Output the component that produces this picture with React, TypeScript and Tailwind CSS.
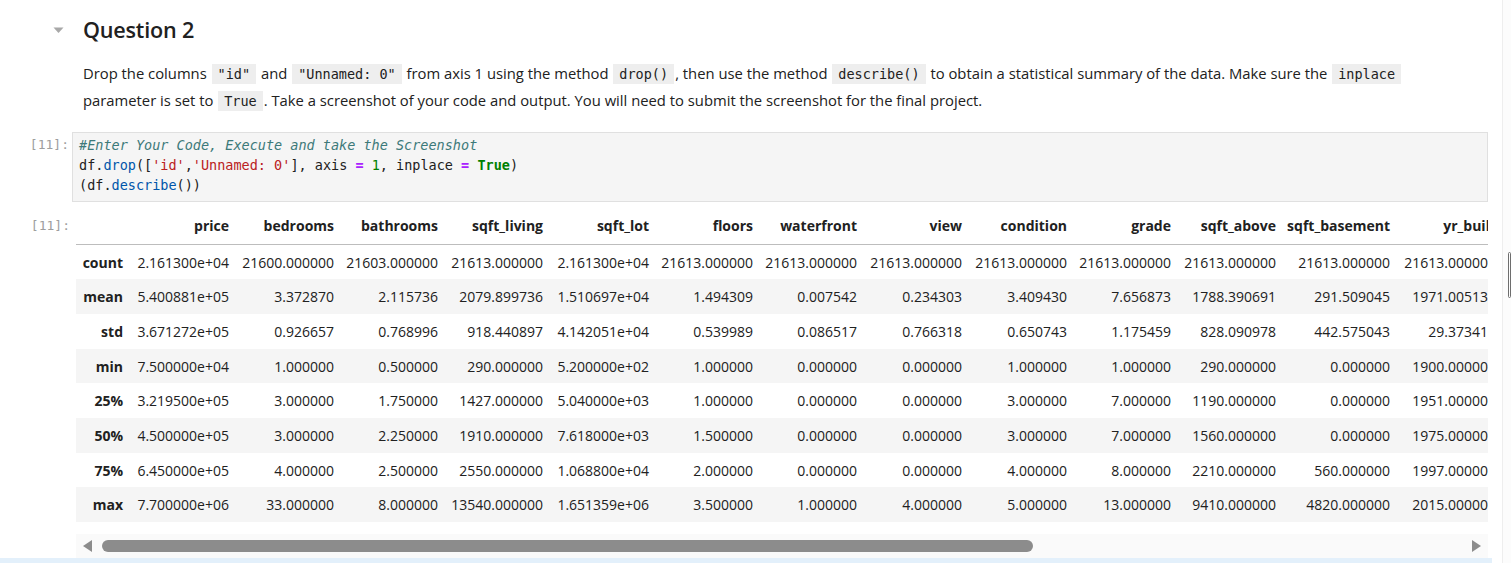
const ROWS: [string, string[]][] = [
  ['count', ['2.161300e+04', '21600.000000', '21603.000000', '21613.000000', '2.161300e+04', '21613.000000', '21613.000000', '21613.000000', '21613.000000', '21613.000000', '21613.000000', '21613.000000', '21613.000000']],
  ['mean', ['5.400881e+05', '3.372870', '2.115736', '2079.899736', '1.510697e+04', '1.494309', '0.007542', '0.234303', '3.409430', '7.656873', '1788.390691', '291.509045', '1971.005136']],
  ['std', ['3.671272e+05', '0.926657', '0.768996', '918.440897', '4.142051e+04', '0.539989', '0.086517', '0.766318', '0.650743', '1.175459', '828.090978', '442.575043', '29.373411']],
  ['min', ['7.500000e+04', '1.000000', '0.500000', '290.000000', '5.200000e+02', '1.000000', '0.000000', '0.000000', '1.000000', '1.000000', '290.000000', '0.000000', '1900.000000']],
  ['25%', ['3.219500e+05', '3.000000', '1.750000', '1427.000000', '5.040000e+03', '1.000000', '0.000000', '0.000000', '3.000000', '7.000000', '1190.000000', '0.000000', '1951.000000']],
  ['50%', ['4.500000e+05', '3.000000', '2.250000', '1910.000000', '7.618000e+03', '1.500000', '0.000000', '0.000000', '3.000000', '7.000000', '1560.000000', '0.000000', '1975.000000']],
  ['75%', ['6.450000e+05', '4.000000', '2.500000', '2550.000000', '1.068800e+04', '2.000000', '0.000000', '0.000000', '4.000000', '8.000000', '2210.000000', '560.000000', '1997.000000']],
  ['max', ['7.700000e+06', '33.000000', '8.000000', '13540.000000', '1.651359e+06', '3.500000', '1.000000', '4.000000', '5.000000', '13.000000', '9410.000000', '4820.000000', '2015.000000']],
]

const COLUMNS = ['price', 'bedrooms', 'bathrooms', 'sqft_living', 'sqft_lot', 'floors', 'waterfront', 'view', 'condition', 'grade', 'sqft_above', 'sqft_basement', 'yr_built']

const GRID = 'grid grid-cols-[53px_106px_105px_104px_105px_106px_104px_104px_105px_105px_104px_105px_114px_106px]'

function Chip({ children }: { children: string }) {
  return (
    <code className="bg-[#eeeeee] px-[6px] py-[2px] mx-[1px] font-['DejaVu_Sans_Mono',monospace] text-[13.5px] text-[#212121]">
      {children}
    </code>
  )
}

export default function App() {
  return (
    <div className="w-[1511px] h-[563px] overflow-hidden bg-white flex font-['Open_Sans',sans-serif] text-[#212121]">
      <div className="w-[1502px] shrink-0 flex flex-col">
        {/* Markdown heading cell */}
        <div className="flex items-center pt-[15px] h-[46px]">
          <div className="w-[83px] shrink-0 flex justify-start pl-[53px]">
            <svg width="11" height="7" viewBox="0 0 11 7">
              <path d="M0.5 0.5 L10.5 0.5 L5.5 6 Z" fill="#a8a8a8" />
            </svg>
          </div>
          <h2 className="text-[21.6px] leading-[30px] font-semibold tracking-[-0.2px]">Question 2</h2>
        </div>

        <p className="pl-[83px] pr-[42px] mt-[14px] text-[14.8px] leading-[26px]">
          Drop the columns <Chip>"id"</Chip> and <Chip>"Unnamed: 0"</Chip> from axis 1 using the method <Chip>drop()</Chip>, then
          use the method <Chip>describe()</Chip> to obtain a statistical summary of the data. Make sure the <Chip>inplace</Chip>{' '}
          parameter is set to <Chip>True</Chip>. Take a screenshot of your code and output. You will need to submit the screenshot for
          the final project.
        </p>

        {/* Code cell */}
        <div className="flex mt-[18px]">
          <div className="w-[72px] shrink-0 pt-[3px] pr-[3px] text-right font-['DejaVu_Sans_Mono',monospace] text-[13px] text-[#9e9e9e]">
            [11]:
          </div>
          <div className="w-[1416px] border border-[#e0e0e0] bg-[#f5f5f5] px-[6px] pt-[2px] pb-[6px] font-['DejaVu_Sans_Mono',monospace] text-[13.5px] leading-[20px] text-[#212121] whitespace-pre">
            <div className="italic text-[#3d7a7a]">#Enter Your Code, Execute and take the Screenshot</div>
            <div>
              df.<span className="text-[#0055aa]">drop</span>([<span className="text-[#ba2121]">'id'</span>,
              <span className="text-[#ba2121]">'Unnamed: 0'</span>], axis <span className="font-bold text-[#aa22ff]">=</span>{' '}
              <span className="text-[#008000]">1</span>, inplace <span className="font-bold text-[#aa22ff]">=</span>{' '}
              <span className="font-bold text-[#008000]">True</span>)
            </div>
            <div>
              (df.<span className="text-[#0055aa]">describe</span>())
            </div>
          </div>
        </div>

        {/* Output */}
        <div className="flex mt-[8px]">
          <div className="w-[76px] shrink-0 pt-[6px] pr-[6px] text-right font-['DejaVu_Sans_Mono',monospace] text-[13px] text-[#9e9e9e]">
            [11]:
          </div>
          <div className="w-[1412px] overflow-hidden">
            <div className={`${GRID} w-[1439px] h-[35px] pb-[3px] items-center border-b border-[#bdbdbd] text-[14px] font-bold`}>
              <div />
              {COLUMNS.map((c) => (
                <div key={c} className="text-right pr-[6px] whitespace-nowrap">
                  {c}
                </div>
              ))}
            </div>
            {ROWS.map(([label, values], i) => (
              <div
                key={label}
                className={`${GRID} w-[1439px] h-[34.67px] items-center text-[14px] ${i % 2 === 1 ? 'bg-[#f5f5f5]' : 'bg-white'}`}
              >
                <div className="text-right pr-[6px] font-bold">{label}</div>
                {values.map((v, j) => (
                  <div key={j} className="text-right pr-[6px] whitespace-nowrap">
                    {v}
                  </div>
                ))}
              </div>
            ))}

            {/* Horizontal scrollbar */}
            <div className="mt-[12px] h-[24px] bg-[#fafafa] flex items-center px-[7px] gap-[10px]">
              <svg width="9" height="12" viewBox="0 0 9 12">
                <path d="M9 0 L9 12 L0 6 Z" fill="#8c8c8c" />
              </svg>
              <div className="w-[931px] h-[12px] rounded-full bg-[#8c8c8c]" />
              <div className="flex-1" />
              <svg width="9" height="12" viewBox="0 0 9 12">
                <path d="M0 0 L0 12 L9 6 Z" fill="#8c8c8c" />
              </svg>
            </div>
          </div>
        </div>
        <div className="mt-auto h-[5px] w-[1492px] bg-[#e3f0fb]" />
      </div>

      {/* Page scrollbar */}
      <div className="flex-1 border-l border-[#eeeeee] bg-[#fcfcfc] relative">
        <div className="absolute left-[5px] top-[252px] w-[3px] h-[46px] rounded-[2px] border border-[#6e6e6e]" />
      </div>
    </div>
  )
}
